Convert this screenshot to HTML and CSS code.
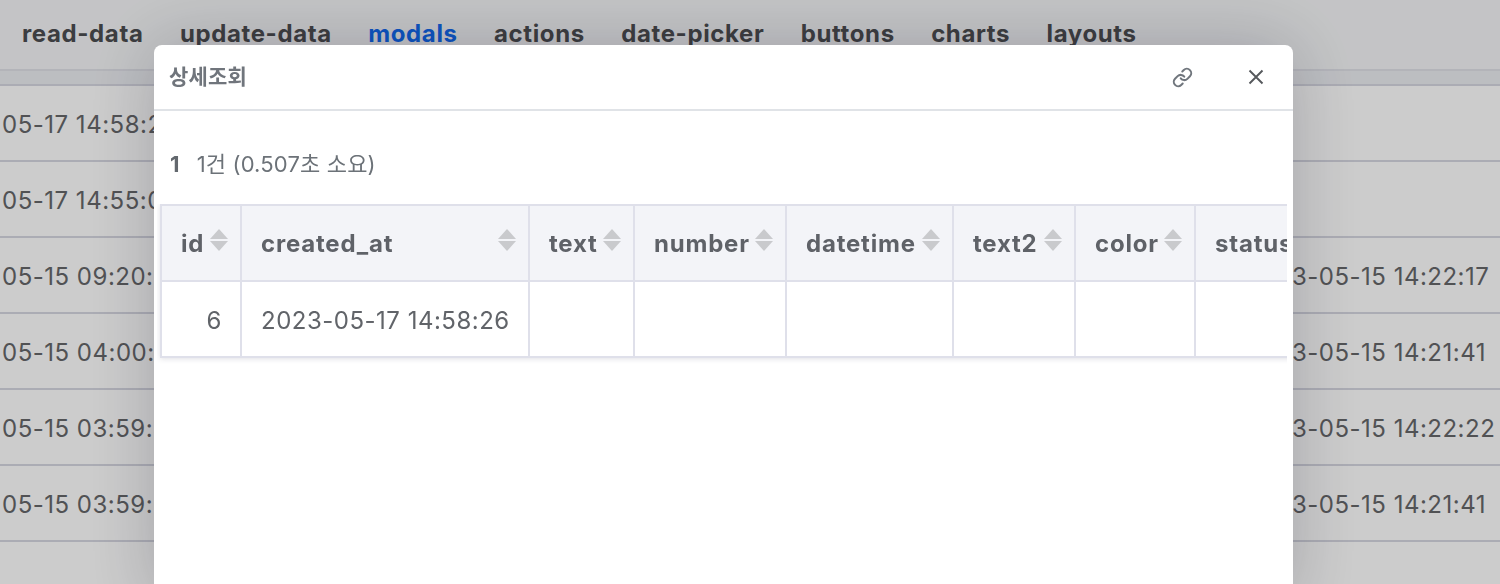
FILE: index.html
```html
<!DOCTYPE html>
<html lang="ko">
<head>
<meta charset="utf-8">
<title>modals</title>
<link rel="stylesheet" href="styles.css">
</head>
<body>
<div class="page">
  <nav class="nav">
    <a>read-data</a><a>update-data</a><a class="active">modals</a><a>actions</a><a>date-picker</a><a>buttons</a><a>charts</a><a>layouts</a>
  </nav>
  <div class="bg-head"></div>
  <div class="bg-row"><span class="c1">05-17 14:58:26</span><span class="c2"></span></div>
  <div class="bg-row"><span class="c1">05-17 14:55:02</span><span class="c2"></span></div>
  <div class="bg-row"><span class="c1">05-15 09:20:11</span><span class="c2">2023-05-15 14:22:17</span></div>
  <div class="bg-row"><span class="c1">05-15 04:00:12</span><span class="c2">2023-05-15 14:21:41</span></div>
  <div class="bg-row"><span class="c1">05-15 03:59:48</span><span class="c2">2023-05-15 14:22:22</span></div>
  <div class="bg-row"><span class="c1">05-15 03:59:31</span><span class="c2">2023-05-15 14:21:41</span></div>
</div>
<div class="backdrop"></div>
<div class="modal">
  <header class="modal-head">
    <h2 class="modal-title">상세조회</h2>
    <button class="icon-btn link-btn" aria-label="링크">
      <svg viewBox="0 0 24 24" width="21" height="21" fill="none" stroke="#70767d" stroke-width="2.3" stroke-linecap="round" stroke-linejoin="round"><path d="M10 13a5 5 0 0 0 7.54.54l3-3a5 5 0 0 0-7.07-7.07l-1.72 1.71"/><path d="M14 11a5 5 0 0 0-7.54-.54l-3 3a5 5 0 0 0 7.07 7.07l1.71-1.71"/></svg>
    </button>
    <button class="icon-btn" aria-label="닫기">
      <svg viewBox="0 0 16 16" width="16" height="16" fill="none" stroke="#55585c" stroke-width="1.9"><path d="M1.5 1.5l13 13M14.5 1.5l-13 13"/></svg>
    </button>
  </header>
  <div class="summary"><b>1</b><span>1건 (0.507초 소요)</span></div>
  <div class="table-wrap">
    <table class="grid">
      <colgroup>
        <col class="w-id"><col class="w-created"><col class="w-text"><col class="w-number"><col class="w-datetime"><col class="w-text2"><col class="w-color"><col class="w-status">
      </colgroup>
      <thead>
        <tr>
          <th><div class="th"><span>id</span><i class="sort"></i></div></th>
          <th><div class="th"><span>created_at</span><i class="sort"></i></div></th>
          <th><div class="th"><span>text</span><i class="sort"></i></div></th>
          <th><div class="th"><span>number</span><i class="sort"></i></div></th>
          <th><div class="th"><span>datetime</span><i class="sort"></i></div></th>
          <th><div class="th"><span>text2</span><i class="sort"></i></div></th>
          <th><div class="th"><span>color</span><i class="sort"></i></div></th>
          <th><div class="th"><span>status</span><i class="sort"></i></div></th>
        </tr>
      </thead>
      <tbody>
        <tr><td class="num">6</td><td>2023-05-17 14:58:26</td><td></td><td></td><td></td><td></td><td></td><td></td></tr>
      </tbody>
    </table>
  </div>
</div>
</body>
</html>
```
FILE: styles.css
```css
* { box-sizing: border-box; }
html, body { margin: 0; height: 100%; overflow: hidden; }
body {
  font-family: Inter, "Noto Sans CJK KR", "Liberation Sans", sans-serif;
  background: #fff;
  color: #444;
  letter-spacing: 0.5px;
}
.page { width: 1500px; height: 584px; overflow: hidden; background: #fff; }
.nav {
  display: flex;
  gap: 36.4px;
  height: 71px;
  padding: 17px 0 0 22px;
  font-size: 24px;
  line-height: 34px;
  font-weight: 700;
  letter-spacing: 0.62px;
  color: #4c4d50;
  background: #f5f6f8;
  border-bottom: 2px solid #e0e1e8;
}
.nav .active { color: #1069f0; }
.bg-head { height: 15px; background: #eceef2; border-bottom: 2px solid #d6d7e1; }
.bg-row {
  height: 76px;
  display: flex;
  justify-content: space-between;
  align-items: center;
  border-bottom: 2px solid #d6d7e1;
  font-size: 24px;
  color: #66676a;
  padding: 2px 0 0 2px;
}
.c2 { width: 249px; margin-right: 5px; white-space: nowrap; }
.backdrop {
  position: fixed;
  inset: 0;
  background: rgba(0, 0, 0, 0.2);
}
.modal {
  position: fixed;
  left: 154px;
  top: 45px;
  width: 1139px;
  height: 560px;
  background: #fff;
  border-radius: 8px 8px 0 0;
  box-shadow: 0 0 70px rgba(20, 20, 35, 0.22);
}
.modal-head {
  display: flex;
  align-items: center;
  height: 66px;
  padding: 0 29px 0 15px;
  border-bottom: 2px solid #e0e3e7;
}
.modal-title {
  margin: 0;
  flex: 1;
  font-size: 21px;
  line-height: 30px;
  font-weight: 700;
  letter-spacing: 0.2px;
  color: #70757c;
}
.icon-btn {
  display: flex;
  padding: 0;
  border: 0;
  background: none;
}
.link-btn { margin-right: 55px; }
.summary {
  display: flex;
  gap: 17px;
  padding: 38px 0 0 16px;
  font-size: 22px;
  line-height: 30px;
  letter-spacing: 0.15px;
  color: #6c7278;
}
.summary b { color: #63686e; }
.table-wrap {
  margin: 25px 6px 0 3px;
  overflow: hidden;
  padding: 0 0 12px 3px;
}
.grid {
  table-layout: fixed;
  width: 1170px;
  border-collapse: collapse;
  border: 2px solid #dfe0ea;
  font-size: 24px;
  color: #616469;
  box-shadow: 0 1px 5px rgba(60, 60, 90, 0.16);
}
.grid th, .grid td {
  height: 76px;
  padding: 0 12px 0 19px;
  border: 2px solid #dfe0ea;
  text-align: left;
  white-space: nowrap;
}
.grid td { padding-top: 2px; }
.grid th { background: #f3f4f8; font-weight: 700; color: #5f6268; letter-spacing: 0.8px; }
.grid .num { text-align: right; padding-right: 18px; }
.w-id { width: 80px; }
.w-created { width: 288px; }
.w-text { width: 105px; }
.w-number { width: 152px; }
.w-datetime { width: 167px; }
.w-text2 { width: 122px; }
.w-color { width: 120px; }
.w-status { width: 136px; }
.th { display: flex; justify-content: space-between; align-items: center; }
.sort {
  position: relative;
  flex: none;
  width: 18px;
  height: 22px;
  margin: -6px 0 0 0;
}
.sort::before, .sort::after {
  content: "";
  position: absolute;
  left: 0;
  border-left: 9px solid transparent;
  border-right: 9px solid transparent;
}
.sort::before { top: 0; border-bottom: 10px solid #c9cacd; }
.sort::after { bottom: 0; border-top: 10px solid #c9cacd; }
```
